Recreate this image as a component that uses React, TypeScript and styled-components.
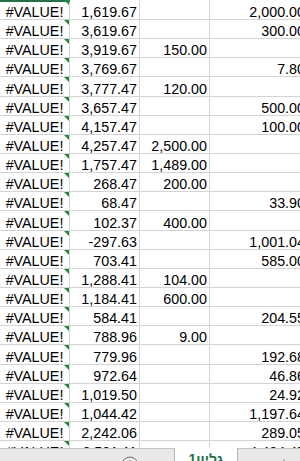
import React from 'react'
import styled, { createGlobalStyle } from 'styled-components'

type RowData = [string, string, string, string]

const rows: RowData[] = [
  ['#VALUE!', '1,619.67', '', '2,000.00'],
  ['#VALUE!', '3,619.67', '', '300.00'],
  ['#VALUE!', '3,919.67', '150.00', ''],
  ['#VALUE!', '3,769.67', '', '7.80'],
  ['#VALUE!', '3,777.47', '120.00', ''],
  ['#VALUE!', '3,657.47', '', '500.00'],
  ['#VALUE!', '4,157.47', '', '100.00'],
  ['#VALUE!', '4,257.47', '2,500.00', ''],
  ['#VALUE!', '1,757.47', '1,489.00', ''],
  ['#VALUE!', '268.47', '200.00', ''],
  ['#VALUE!', '68.47', '', '33.90'],
  ['#VALUE!', '102.37', '400.00', ''],
  ['#VALUE!', '-297.63', '', '1,001.04'],
  ['#VALUE!', '703.41', '', '585.00'],
  ['#VALUE!', '1,288.41', '104.00', ''],
  ['#VALUE!', '1,184.41', '600.00', ''],
  ['#VALUE!', '584.41', '', '204.55'],
  ['#VALUE!', '788.96', '9.00', ''],
  ['#VALUE!', '779.96', '', '192.68'],
  ['#VALUE!', '972.64', '', '46.86'],
  ['#VALUE!', '1,019.50', '', '24.92'],
  ['#VALUE!', '1,044.42', '', '1,197.64'],
  ['#VALUE!', '2,242.06', '', '289.05'],
  ['#VALUE!', '2,531.11', '', '4,424.45'],
]

// excel draws rows at a fractional zoom, so heights step 19/20px
const ROW_PITCH = 19.14
const rowHeight = (i: number) =>
  i === 0 ? 20 : Math.round(19 + ROW_PITCH * i) - Math.round(19 + ROW_PITCH * (i - 1))

const GlobalStyle = createGlobalStyle`
  html, body {
    margin: 0;
    padding: 0;
    overflow: hidden;
    background: #ffffff;
  }
`

const Page = styled.div`
  width: 300px;
  height: 461px;
  overflow: hidden;
  display: flex;
  flex-direction: column;
  font-family: 'Liberation Sans', Arial, sans-serif;
`

const Sheet = styled.div`
  height: 448px;
  flex: none;
  overflow: hidden;
`

const Row = styled.div<{ $h: number }>`
  display: flex;
  height: ${p => p.$h}px;
`

const Cell = styled.div<{ $w: number }>`
  position: relative;
  box-sizing: border-box;
  width: ${p => p.$w}px;
  flex: none;
  height: 100%;
  display: flex;
  align-items: flex-end;
  justify-content: flex-end;
  padding: 0 2px;
  border-right: 1px solid #d4d4d4;
  border-bottom: 1px solid #d4d4d4;
  font-size: 14.3px;
  line-height: 14.5px;
  color: #000000;
  white-space: nowrap;
`

const ErrorCell = styled(Cell)<{ $selected?: boolean }>`
  justify-content: center;
  &::after {
    content: '';
    position: absolute;
    top: 0;
    right: 0;
    border-left: 5px solid transparent;
    border-top: 5px solid #1d8b3f;
  }
  ${p =>
    p.$selected &&
    `
    &::before {
      content: '';
      position: absolute;
      top: 0;
      left: 0;
      right: -1px;
      height: 2px;
      background: #217346;
    }
  `}
`

const TabBar = styled.div`
  flex: 1;
  display: flex;
  background: #e9e9e9;
`

const ButtonArea = styled.div`
  width: 175px;
  box-sizing: border-box;
  border-top: 1px solid #c3c3c3;
  border-right: 1px solid #b5b5b5;
  display: flex;
  justify-content: flex-end;
  padding: 7px 35px 0 0;
`

const SheetTab = styled.div`
  width: 62px;
  background: #ffffff;
  display: flex;
  justify-content: center;
  padding-top: 3px;
  box-sizing: border-box;
  color: #217346;
  font-family: 'Liberation Sans', 'DejaVu Sans', sans-serif;
  font-weight: 700;
  font-size: 14px;
  line-height: 16px;
  text-decoration: underline;
`

const ScrollArea = styled.div`
  flex: 1;
  box-sizing: border-box;
  border-top: 1px solid #c3c3c3;
  border-left: 1px solid #b5b5b5;
  padding: 8px 0 0 40px;
`

const AddIcon = () => (
  <svg width="18" height="18" viewBox="0 0 18 18">
    <circle cx="9" cy="9" r="8" fill="none" stroke="#6b6b6b" strokeWidth="1" />
    <path d="M9 4.5v9M4.5 9h9" stroke="#6b6b6b" strokeWidth="1.2" />
  </svg>
)

const ArrowIcon = () => (
  <svg width="8" height="12" viewBox="0 0 8 12">
    <path d="M6.5 0.5L1 6l5.5 5.5z" fill="none" stroke="#a8a8a8" strokeWidth="1" />
  </svg>
)

const App: React.FC = () => (
  <Page>
    <GlobalStyle />
    <Sheet>
      {rows.map(([a, b, c, d], i) => (
        <Row key={i} $h={rowHeight(i)}>
          <ErrorCell $w={70} $selected={i === 0}>
            {a}
          </ErrorCell>
          <Cell $w={70}>{b}</Cell>
          <Cell $w={70}>{c}</Cell>
          <Cell $w={98}>{d}</Cell>
        </Row>
      ))}
    </Sheet>
    <TabBar>
      <ButtonArea>
        <AddIcon />
      </ButtonArea>
      <SheetTab dir="rtl">גליון1</SheetTab>
      <ScrollArea>
        <ArrowIcon />
      </ScrollArea>
    </TabBar>
  </Page>
)

export default App
